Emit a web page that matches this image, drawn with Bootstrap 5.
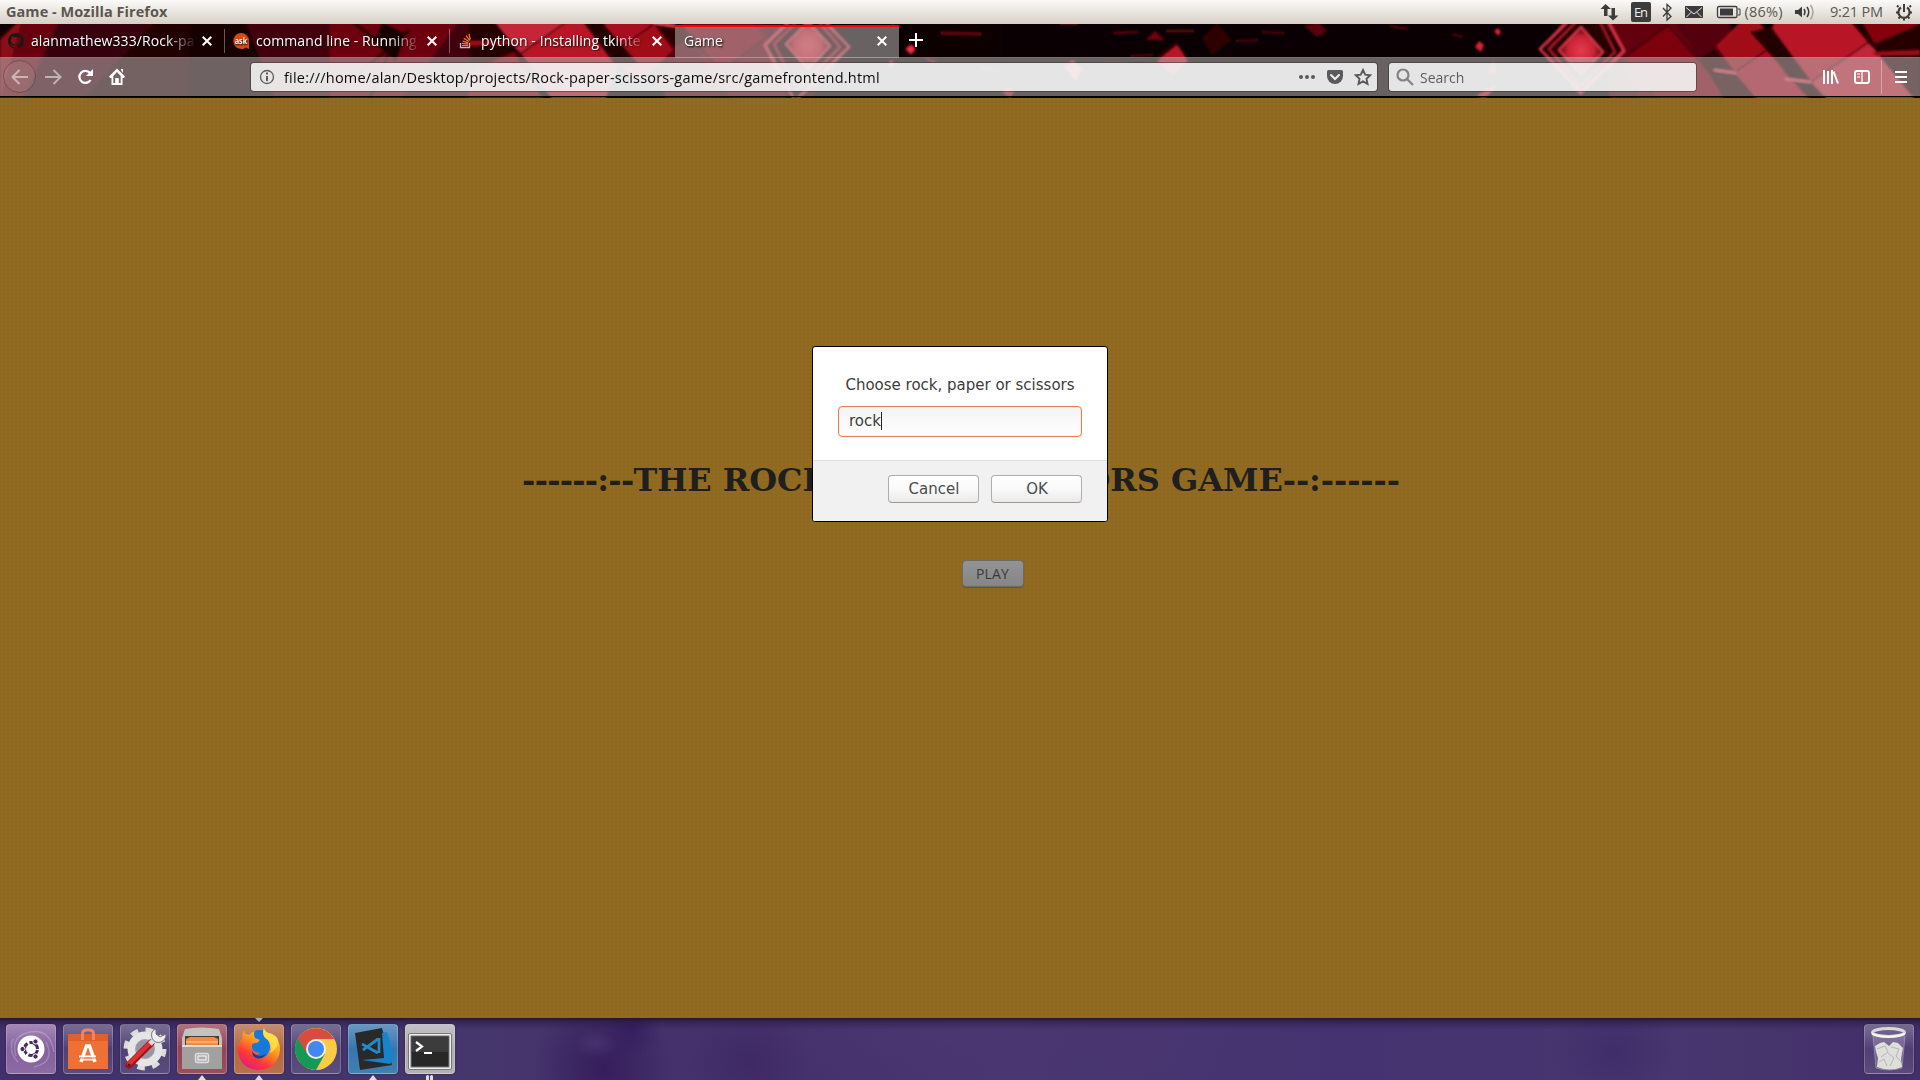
<!DOCTYPE html>
<html lang="en">
<head>
<meta charset="utf-8">
<title>Game - Mozilla Firefox</title>
<link href="https://cdn.jsdelivr.net/npm/bootstrap@5.3.0/dist/css/bootstrap.min.css" rel="stylesheet">
<style>
body{width:1920px;height:1080px;overflow:hidden;font-family:"Open Sans","Noto Sans",sans-serif;font-size:14px;line-height:20px;color:#3c3c3c}
svg{display:block;flex:none}
.panel-top{height:24px;background:linear-gradient(#fbfaf8,#f2f0ec 25%,#d8d0c6)}
.win-title{font-weight:700;font-size:14.5px;letter-spacing:.05px;color:#5c5650;padding-left:6px}
.browser{height:74px;background:#0b0003}
.theme-art{left:0;top:0}
.tab-strip{height:33px}
.ftab{width:225px;color:#fff;text-shadow:1px 1px 2px #000;padding:1px 13px 0 8px}
.ftab .lbl{width:167px;margin-left:3px;overflow:hidden;white-space:nowrap;font-size:14px;letter-spacing:.08px;-webkit-mask-image:linear-gradient(90deg,#000 80%,transparent 99%);mask-image:linear-gradient(90deg,#000 80%,transparent 99%)}
.ftab .sep{right:0;top:5px;width:1px;height:24px;background:rgba(255,255,255,.35)}
.ftab.on{width:224px;height:33px;background:linear-gradient(#f00 2px,rgba(192,188,188,.52) 2px);margin-top:1px;padding:0 12px 2px 9px}
.toolbar{height:40px;background:rgba(192,188,188,.52);border-top:1px solid rgba(210,205,205,.12);border-bottom:1px solid #000}
.field{height:28px;background:rgba(250,250,250,.86);border-radius:3px;box-shadow:0 0 0 1px rgba(50,35,35,.45);color:#0c0c0d}
.field>div{padding-top:1px}
.url{font-size:14.5px;letter-spacing:.215px}
.page{height:920px;background-color:#906a20;background-image:radial-gradient(circle,#936c20 .7px,transparent 1px),radial-gradient(circle,#8d6821 .7px,transparent 1px);background-size:4px 4px,4px 4px;background-position:0 0,2px 2px}
.page h1{font:700 32px/38px "DejaVu Serif",serif;color:#1f1f1f;padding:363px 0 0 2px;white-space:nowrap;letter-spacing:-.06px}
.page h1 .lead-dash{letter-spacing:-.75px}
.page h1 .tail-dash{letter-spacing:-.1px}
.btn-play{width:62px;height:27px;padding:0;border:1px solid #6a6b6e;border-radius:4px;background:linear-gradient(#939393,#868686);color:#3a3a3c;font-size:14px;letter-spacing:.2px;line-height:25px;box-shadow:0 1px 1px rgba(40,40,50,.35);margin:61px 0 0 65px}
.prompt{left:812px;top:248px;width:296px;height:176px;background:#fff;border:1px solid #000;border-radius:3px;font:15px/20px "DejaVu Sans",sans-serif;overflow:hidden}
.prompt .top{height:113px;padding:28px 25px 0;white-space:nowrap}
.prompt .entry{width:244px;height:31px;border:1px solid #e07f5a;border-radius:4px;background:linear-gradient(#f3f3f3,#fff);padding:2px 10px 4px;margin-top:11px;box-shadow:inset 0 0 1px #f0a080}
.caret{width:1px;height:18px;background:#222}
.prompt .foot{height:61px;background:#f1f1f1;border-top:1px solid #dedede;padding:14px 25px 0}
.prompt .btn{width:91px;height:28px;padding:0 0 0 1px;border:1px solid #adadad;border-bottom-color:#999;border-radius:4px;background:linear-gradient(#fff,#fafafa 50%,#ebe9e8);font:15px/25px "DejaVu Sans",sans-serif;color:#4c4c4c}
.dock{height:62px;background:linear-gradient(rgba(30,22,40,.9),rgba(35,24,60,.45) 4px,transparent 12px),radial-gradient(ellipse 22px 14px at 596px 26px,rgba(95,75,140,.35),transparent),radial-gradient(ellipse 70px 80px at 603px 50px,rgba(48,22,86,.75),transparent),radial-gradient(ellipse 30px 30px at 632px 10px,rgba(48,22,90,.6),transparent),radial-gradient(ellipse 60px 50px at 750px 44px,rgba(56,34,96,.5),transparent),radial-gradient(ellipse 60px 50px at 1615px 34px,rgba(52,34,98,.4),transparent),radial-gradient(ellipse 300px 80px at 980px 10px,rgba(80,55,118,.45),transparent),linear-gradient(90deg,#41306b,#45366c 25%,#44306b 40%,#47376f 52%,#443370 70%,#47366e 90%,#422e69);padding:6px 6px 0}
.launch{width:50px;height:50px;border-radius:4px;margin-right:7px;border:1px solid rgba(255,255,255,.22);background:linear-gradient(rgba(255,255,255,.3),rgba(255,255,255,.08) 50%,rgba(255,255,255,.13));box-shadow:0 0 2px rgba(0,0,0,.4)}
.launch svg{margin:-1px}
.l-dash{background-color:#7b5496}.l-files{background-color:#8c3444}.l-fox{background-color:#ad5c32}.l-code{background-color:#266ba6}.l-term{background-color:#a8a6ac}
.pip{left:18px;top:51px}
.pip-top{left:18px;top:-7px}
</style>
<script src="https://cdn.jsdelivr.net/npm/bootstrap@5.3.0/dist/js/bootstrap.bundle.min.js"></script>
</head>
<body>
<header class="panel-top d-flex align-items-center">
  <div class="win-title me-auto">Game - Mozilla Firefox</div>
  <svg width="320" height="24" viewBox="1600 0 320 24" fill="none" stroke="#3c3c3c">
    <path d="M1605.500 4l-5 5h3.500v7h3.500V9h3.500zM1613 20.500l-5-5h3.500V8h3.500v7.500h3.500z" fill="#3c3c3c" stroke="none"/>
    <rect x="1631" y="2" width="20" height="20" rx="2" fill="#3c3c3c" stroke="none"/>
    <text x="1634" y="17" font-size="13" fill="#eee" stroke="none" textLength="14">En</text>
    <path d="M1663 8l8 8.500-4 3.500V4.500l4 3.500-8 8.500" stroke-width="1.300"/>
    <rect x="1685" y="6" width="18" height="12" fill="#3c3c3c" stroke="none"/>
    <path d="M1686 7.500l8 6.500 8-6.500M1686.500 17l5-5M1701.500 17l-5-5" stroke="#e8e4de"/>
    <rect x="1717.500" y="6.500" width="19.500" height="11" rx="1.500" stroke-width="1.300"/><path d="M1738 9h2v6h-2"/><rect x="1720" y="8.500" width="13" height="7" fill="#3c3c3c" stroke="none"/>
    <text x="1744.500" y="17" font-size="14.500" fill="#5a5752" stroke="none" textLength="38">(86%)</text>
    <path d="M1795 10h3l4-3.500v11L1798 14h-3z" fill="#3c3c3c" stroke="none"/><path d="M1804 9q2 3 0 6M1807 7q3.500 5 0 10" stroke-width="1.500"/><path d="M1810.500 5q5 7 0 14.500" stroke="#aaa49c" stroke-width="1.500"/>
    <text x="1830" y="17" font-size="14.500" fill="#5a5752" stroke="none" textLength="53">9:21 PM</text>
    <path d="M1901 7.500a5.600 5.600 0 1 0 6 0" stroke-width="2.200"/><path d="M1904 4v8" stroke-width="2"/><path d="M1898.500 7l-1.500-1.500M1909.500 7l1.500-1.500M1898 12.500h-2M1910 12.500h2M1900 17l-1.500 1.500M1908 17l1.500 1.500M1904 18.500v2" stroke-width="2"/>
  </svg>
</header>
<div class="browser position-relative">
  <svg class="theme-art position-absolute" width="1920" height="74" viewBox="0 24 1920 74">
    <defs>
      <radialGradient id="core"><stop offset="0" stop-color="#e63a4c"/><stop offset=".6" stop-color="#c82434"/><stop offset="1" stop-color="#500008"/></radialGradient>
      <filter id="soft" x="-5%" y="-20%" width="110%" height="140%"><feGaussianBlur stdDeviation=".9"/></filter>
      <g id="blocks">
        <path d="M1600 -10h122v50l40 80h-150z" fill="#4a0008"/>
        <path d="M1600 -10h52l80 110h-92l-20-45z" fill="#63000b"/>
        <path d="M1625 58l45-34 60 76h-70z" fill="#7d0411"/>
        <path d="M1672 -10h50l10 44-26 25-8 4z" fill="#54000a"/>
        <path d="M1700 58l14-9 44 51h-34z" fill="#2a0005"/>
        <path d="M1716 46l30-30h8l46 54-64 3z" fill="#a00818"/>
        <path d="M1735 73l30-22 45 49h-52z" fill="#a90e20"/>
        <path d="M1750 32l20-5 60 73h-20l-42-48z" fill="#200004"/>
        <path d="M1772 28l14-38h46l38 52-58 40z" fill="#b81528"/>
        <path d="M1811 82l58-40 46 58h-87z" fill="#c32638"/>
        <path d="M1842 -10h78v50l-44 6z" fill="#850010"/>
        <path d="M1874 44l46-20v76h-4z" fill="#280006"/>
        <path d="M1872 52l48-2v5l-44 1z" fill="#960818"/>
        <path d="M1852 20l22 26" stroke="#2a0005" stroke-width="5" fill="none"/>
        <path d="M1668 25l65 75M1625 57l43-32M1735 72l32-22M1811 82l58-40" stroke="#2a0005" stroke-width="1.500" fill="none"/>
        <path d="M1714 70l22 3M1785 79l26 3" stroke="#ff4d60" stroke-width="2"/>
        <path d="M1579 -6l46 57-46 45-34-47z" fill="#260005"/>
        <path d="M1540 49l54-54 30 56-43 42z" fill="none" stroke="#e4344a" stroke-width="2.500"/>
        <path d="M1549 49l43-43 23 46-35 34z" fill="none" stroke="#a51a2b" stroke-width="2"/>
        <path d="M1559 50l22-23 22 25-22 22z" fill="url(#core)" stroke="#f04458" stroke-width="1.500"/>
        <path d="M1475 47l4-6 5 4-3 7zM1494 31l4-3 3 4-3 4z" fill="#d82238"/>
        <path d="M1487 73l6-12 5 13z" fill="#8d1424"/>
        <path d="M1390 26l18 3M1452 34l11 3M1262 32l22 1M1236 41l22-1" stroke="#a01022" stroke-width="1.200"/>
        <path d="M1304 26l14-4 9 9-10 6z" fill="#5a000c"/><path d="M1202 38l15-15 15 17-20 15z" fill="#2e0006"/>
        <path d="M1476 96l18-11 3 2-12 11z" fill="#ce182d"/>
      </g>
    </defs>
    <rect y="24" width="1920" height="74" fill="#0a0003"/>
    <g filter="url(#soft)">
      <rect x="0" y="20" width="190" height="80" fill="#220005"/>
      <path d="M0 40l20-20h40L22 100H0z" fill="#8b0816"/><path d="M0 20h22L0 36z" fill="#080001"/>
      <path d="M22 20h135l-75 80H0z" fill="#4c000a" opacity=".55"/>
      <rect x="190" y="20" width="90" height="80" fill="#120003"/>
      <path d="M245 20h230v80H275z" fill="#430009"/><path d="M330 20h130L400 100h-70z" fill="#6e000c"/>
      <path d="M382 22l24 12-10 28-22-20z" fill="#180003"/><path d="M350 20l40 30-20 48M410 30l-70 60" stroke="#1a0004" stroke-width="3" fill="none"/>
      <use href="#blocks" transform="rotate(180 1194.500 48)"/>
      <use href="#blocks"/>
      <path d="M893 20h110v38H893z" fill="#0d0003"/>
      <path d="M906 49l5-4 4 4-4 5z" fill="#f0304a"/>
      <path d="M1146 40l9-9 10 9z" fill="#72000f"/><path d="M1157 61l20-16 11 16-15 14z" fill="#b81228"/>
      <path d="M1065 68l8-7 9 8-6 12z" fill="#e8304a"/><path d="M1002 92l6-5 7 4-5 7z" fill="#a01426"/>
      <path d="M941 33l40 1M1113 33l25-1M1166 31h28M1060 24h18M928 60l8 2M981 68l17 3" stroke="#8c0a1b" stroke-width="1.500"/>
    </g>
  </svg>
  <nav class="tab-strip d-flex position-relative">
    <div class="ftab d-flex align-items-center position-relative">
      <svg width="16" height="16" viewBox="0 0 16 16" class="me-1"><path fill="#191717" d="M8 0C3.580 0 0 3.580 0 8c0 3.540 2.290 6.530 5.470 7.590.4.070.55-.17.55-.38v-1.490c-2.010.37-2.530-.49-2.690-.94-.09-.23-.48-.94-.82-1.130-.28-.15-.68-.52-.01-.53.63-.01 1.080.58 1.230.82.72 1.210 1.870.87 2.330.66.07-.52.28-.87.51-1.070-1.780-.2-3.640-.89-3.640-3.950 0-.87.31-1.590.82-2.150-.08-.2-.36-1.020.08-2.120 0 0 .67-.21 2.200.82a7.600 7.600 0 0 1 4 0c1.530-1.040 2.200-.82 2.200-.82.44 1.100.16 1.920.08 2.120.51.56.82 1.270.82 2.150 0 3.070-1.870 3.750-3.650 3.950.29.25.54.73.54 1.480v2.200c0 .21.150.46.55.38A8 8 0 0 0 16 8c0-4.420-3.580-8-8-8"/></svg>
      <div class="lbl">alanmathew333/Rock-pa</div>
      <svg width="10" height="10" viewBox="0 0 10 10" class="ms-auto" stroke="#fff" stroke-width="2"><path d="M.7.700l8.600 8.600M9.300.700L.7 9.300"/></svg>
      <i class="sep position-absolute"></i>
    </div>
    <div class="ftab d-flex align-items-center position-relative">
      <svg width="16" height="16" viewBox="0 0 16 16" class="me-1"><path d="M8 0a8 8 0 0 1 8 8v8l-3-1.500A8 8 0 1 1 8 0" fill="#dd4814"/><text x="1.700" y="10.800" font-size="8" font-weight="700" fill="#fff" textLength="12.500" lengthAdjust="spacingAndGlyphs">ask</text></svg>
      <div class="lbl">command line - Running</div>
      <svg width="10" height="10" viewBox="0 0 10 10" class="ms-auto" stroke="#fff" stroke-width="2"><path d="M.7.700l8.600 8.600M9.300.700L.7 9.300"/></svg>
      <i class="sep position-absolute"></i>
    </div>
    <div class="ftab d-flex align-items-center">
      <svg width="16" height="16" viewBox="0 0 16 16" class="me-1" fill="none"><path d="M2.500 10v4.500h9V10" stroke="#bcbbbb" stroke-width="1.300"/><path d="M4 12.500h6M4 10.300l6 .8M4.500 8l5.700 1.900M5.800 5.200l5 3.200M8 2.700l3.700 4.600M11 1l1.300 5.500" stroke="#f48024" stroke-width="1.200"/></svg>
      <div class="lbl">python - Installing tkinte</div>
      <svg width="10" height="10" viewBox="0 0 10 10" class="ms-auto" stroke="#fff" stroke-width="2"><path d="M.7.700l8.600 8.600M9.300.700L.7 9.300"/></svg>
    </div>
    <div class="ftab on d-flex align-items-center">
      <div>Game</div>
      <svg width="10" height="10" viewBox="0 0 10 10" class="ms-auto" stroke="#fff" stroke-width="2"><path d="M.7.700l8.600 8.600M9.300.700L.7 9.300"/></svg>
    </div>
    <svg width="34" height="33" viewBox="0 0 34 33" stroke="#fff" stroke-width="2"><path d="M10 16h14M17 9v14"/></svg>
  </nav>
  <div class="toolbar d-flex align-items-center position-relative">
    <svg width="251" height="38" viewBox="0 58 251 38" fill="none">
      <circle cx="19.500" cy="76.500" r="16" fill="rgba(255,255,255,.06)" stroke="rgba(70,35,40,.4)"/>
      <path d="M28 77H13M19.500 70l-7 7 7 7" stroke="rgba(255,255,255,.5)" stroke-width="2"/>
      <path d="M45 77h15M53.500 70l7 7-7 7" stroke="rgba(255,255,255,.5)" stroke-width="2"/>
      <path d="M90.500 80a6 6 0 1 1-.5-7" stroke="#fff" stroke-width="2.300"/><path d="M93 69v7h-7z" fill="#fff"/>
      <path d="M117 68.500l8 8-1 1.500h-1.500v7h-11v-7H110l-1-1.500zM121 70v-1h2v4z" fill="#fff"/><path d="M113.300 83V76l3.700-4 3.700 4v7h-2v-4.500h-3.400V83z" fill="#766"/><rect x="115.500" y="78" width="3" height="6" fill="#fff"/>
    </svg>
    <div class="field d-flex align-items-center" style="width:1126px">
      <svg width="33" height="28" viewBox="251 63 33 28" fill="none" stroke="#5c5b5d" stroke-width="1.300"><circle cx="267" cy="77" r="6.500"/><path d="M267 76v5M267 72.500v2" stroke-width="2"/></svg>
      <div class="url text-nowrap">file:///home/alan/Desktop/projects/Rock-paper-scissors-game/src/gamefrontend.html</div>
      <svg class="ms-auto" width="84" height="28" viewBox="1293 63 84 28" fill="none"><g fill="#5a595b"><circle cx="1301" cy="77" r="2"/><circle cx="1307" cy="77" r="2"/><circle cx="1313" cy="77" r="2"/><path d="M1328.500 70h13q1.500 0 1.500 1.500V76a8 8 0 0 1-16 0v-4.500q0-1.500 1.500-1.500"/></g><path d="M1331 75l4 4 4-4" stroke="#eee" stroke-width="2" stroke-linecap="round"/><path d="M1363 70l2.200 4.700 5 .6-3.700 3.500 1 5-4.500-2.500-4.500 2.500 1-5-3.700-3.500 5-.6z" stroke="#5a595b" stroke-width="1.900"/></svg>
    </div>
    <div class="field d-flex align-items-center" style="width:307px;margin-left:12px">
      <svg width="31" height="28" viewBox="1389 63 31 28" fill="none" stroke="#858285" stroke-width="2.200"><circle cx="1403" cy="75" r="5.500"/><path d="M1407 79l6 6"/></svg>
      <div style="color:#5f5c5f">Search</div>
    </div>
    <svg width="224" height="38" viewBox="1696 58 224 38" stroke="#fff" stroke-width="2" fill="none"><path d="M1824 70v14M1828 71v13M1832 70v14M1833.500 71.500l4.500 12"/><rect x="1855" y="71" width="14" height="12" rx="2"/><path d="M1862 71v12M1857 74h3M1857 77h3" stroke-width="1.200"/><path d="M1881.500 60v34" stroke="rgba(255,255,255,.35)" stroke-width="1"/><path d="M1895 72h12M1895 77h12M1895 82h12"/></svg>
  </div>
</div>
<main class="page position-relative text-center">
  <h1 class="m-0"><span class="lead-dash">------:--</span>THE ROCK PAPER SCISSORS GAME<span class="tail-dash">--:------</span></h1>
  <button class="btn btn-play">PLAY</button>
  <section class="prompt position-absolute" role="dialog">
    <div class="top">
      <div>Choose rock, paper or scissors</div>
      <div class="entry d-flex align-items-center"><span>rock</span><i class="caret"></i></div>
    </div>
    <div class="foot d-flex justify-content-end">
      <button class="btn me-2">Cancel</button><button class="btn ms-1">OK</button>
    </div>
  </section>
</main>
<footer class="dock d-flex">
  <div class="launch l-dash"><svg width="50" height="50" viewBox="0 0 50 50" fill="none"><g stroke="#fff" stroke-opacity=".22" stroke-width="1.500"><path d="M10 32Q4 12 24 8t24 20M40 18q10 20-12 25M12 38Q2 28 7 15"/></g><circle cx="25" cy="25" r="13.500" fill="#fff"/><circle cx="25" cy="25" r="6.500" stroke="#472a63" stroke-width="3" stroke-dasharray="11.600 2" stroke-dashoffset="-1"/><g fill="#472a63" stroke="#fff"><circle cx="16.500" cy="25" r="2.600"/><circle cx="29.500" cy="17.500" r="2.600"/><circle cx="29.500" cy="32.500" r="2.600"/></g></svg></div>
  <div class="launch"><svg width="50" height="50" viewBox="0 0 50 50" fill="none"><path d="M5 10h40v35H5z" fill="#ee7034"/><path d="M5 10h40v7H5z" fill="#c94d2a" opacity=".45"/><path d="M19.500 16v-6q0-4 4-4h3q4 0 4 4v6" stroke="#ed8562" stroke-width="3"/><path d="M18 38l5.500-16h3L32 38" stroke="#fff" stroke-width="3.500"/><path d="M16 32.500h17M17 35.500h16" stroke="#fff" stroke-width="2"/><path d="M17 34h16" stroke="#ee7034"/></svg></div>
  <div class="launch"><svg width="50" height="50" viewBox="0 0 50 50" fill="none"><circle cx="25" cy="25" r="19" stroke="#dcdcdc" stroke-width="5" stroke-dasharray="7.460 7.460"/><circle cx="25" cy="25" r="13.500" stroke="#e5e5e5" stroke-width="8"/><circle cx="25" cy="25" r="9.500" fill="#9a94a8" stroke="#aaa"/><path d="M9 41L31 19" stroke="#9b1418" stroke-width="7" stroke-linecap="round"/><path d="M9 40L31 18" stroke="#db3132" stroke-width="4.500" stroke-linecap="round"/><path d="M30 20l5-5" stroke="#ddd" stroke-width="5"/><path d="M36 5q-6 2-4 9 3 6 9 4 5-2 5-8l-6 3-4-3z" fill="#eee" stroke="#777"/><circle cx="9" cy="41" r="1.500" fill="#611"/></svg></div>
  <div class="launch l-files position-relative"><svg width="50" height="50" viewBox="0 0 50 50"><path d="M8 5q17-3 34 0l3 9v31H5V14z" fill="#c4c2c1"/><path d="M8 12h34v10H8z" fill="#4b3b35"/><path d="M9 15l4-2h24l4 2v7H9z" fill="#f18b41"/><path d="M9 18h32" stroke="#ffd2a0"/><path d="M5 21h40v24H5z" fill="#a3a1a0"/><path d="M5 21h40v2H5z" fill="#ddd"/><rect x="18.500" y="29.500" width="13" height="9" rx="2" fill="#aaa" stroke="#ddd" stroke-width="1.500"/><rect x="21" y="32" width="8" height="4" fill="none" stroke="#fff"/></svg><svg class="pip position-absolute" width="12" height="6"><path d="M3 5l4-5 4 5z" fill="#ddd"/></svg></div>
  <div class="launch l-fox position-relative"><svg width="50" height="50" viewBox="0 0 50 50"><defs><linearGradient id="fx" x1=".8" y1="0" x2=".2" y2="1"><stop offset="0" stop-color="#ffe34b"/><stop offset=".4" stop-color="#ff9a20"/><stop offset=".7" stop-color="#ff3a35"/><stop offset="1" stop-color="#e31587"/></linearGradient></defs><circle cx="26" cy="20" r="14" fill="#1478dc"/><path d="M30 4q-3 8 4 12 5 8-2 16-8 6-14-1 5 1 8-2-8-1-8-6-1-4 5-4l3-3-5-2q-2-4 0-7-4 1-6 4l-3-1q-2-1-2-4-2 4-2 9-5 6-4 13 3 17 20 18 20-1 22-20 0-12-8-16-8-2-8-6" fill="url(#fx)"/><path d="M30 4q-3 8 4 12 5 6 2 13 8-5 8-10 1-6-6-9-8-2-8-6" fill="#ffe34c" opacity=".8"/><path d="M18 27q5 8 14 3-4 6-10 4-4-2-4-7" fill="#203b96"/></svg><svg class="pip position-absolute" width="12" height="6"><path d="M3 5l4-5 4 5z" fill="#ddd"/></svg><svg class="pip-top position-absolute" width="12" height="6"><path d="M3 1h8l-4 4z" fill="#aaa"/></svg></div>
  <div class="launch"><svg width="50" height="50" viewBox="0 0 50 50"><circle cx="25" cy="25" r="21" fill="#fbcb43"/><path d="M25 25L6.800 14.500A21 21 0 0 0 25 46l9-16z" fill="#159957"/><path d="M6.800 14.500A21 21 0 0 1 43.200 15H25l-9 15z" fill="#d84b40"/><circle cx="25" cy="25" r="10" fill="#eee"/><circle cx="25" cy="25" r="8" fill="#4387ef"/></svg></div>
  <div class="launch l-code position-relative"><svg width="50" height="50" viewBox="0 0 50 50" fill="none"><path d="M7 9l27-5 10 37-32 5z" fill="#292929"/><path d="M34 9l5-1 7 26-4 6-28-4 22-2z" fill="#1684cb"/><path d="M31 14v15M30 15L15 26M14 20l16 9" stroke="#2489ca" stroke-width="2.800"/></svg><svg class="pip position-absolute" width="12" height="6"><path d="M3 5l4-5 4 5z" fill="#ddd"/></svg></div>
  <div class="launch l-term position-relative"><svg width="50" height="50" viewBox="0 0 50 50" fill="none"><rect x="3.500" y="9.500" width="43" height="36" rx="1.500" fill="#eee" stroke="#777"/><rect x="6" y="12" width="38" height="31" fill="#282828" stroke="#777"/><path d="M7 13h36v15H7z" fill="#3c3c3c"/><path d="M11 18l6 4.500-6 4.500M19 29h8" stroke="#fff" stroke-width="2.200"/></svg><svg class="pip position-absolute" width="14" height="6"><path d="M3 5V1q2-2 3 0v4zM7 5V1q2-2 3 0v4z" fill="#ddd"/></svg></div>
  <div class="launch ms-auto me-0"><svg width="50" height="50" viewBox="0 0 50 50" fill="none"><path d="M9 12l3 32q13 4 26 0l3-32" fill="#fff" fill-opacity=".18" stroke="#ccc" stroke-opacity=".4"/><path d="M11 22l5-3 4-1 5 4 4-4 5 1 5 5-1 5-1 6 1 8q-12 5-25 0l1-9-2-6z" fill="#dededb"/><path d="M13 25l8-3 3 6-7 5M27 23l8 2-3 7 5 6M24 29l6 5-4 8M15 38l5-3 3 7" stroke="#b5b5b1" stroke-width="1"/><ellipse cx="24.500" cy="8.500" rx="16" ry="4" stroke="#d9dad5" stroke-width="3"/><path d="M8 10q16 6 33 0" stroke="#f5f5f1" stroke-width="2"/></svg></div>
</footer>
</body>
</html>
